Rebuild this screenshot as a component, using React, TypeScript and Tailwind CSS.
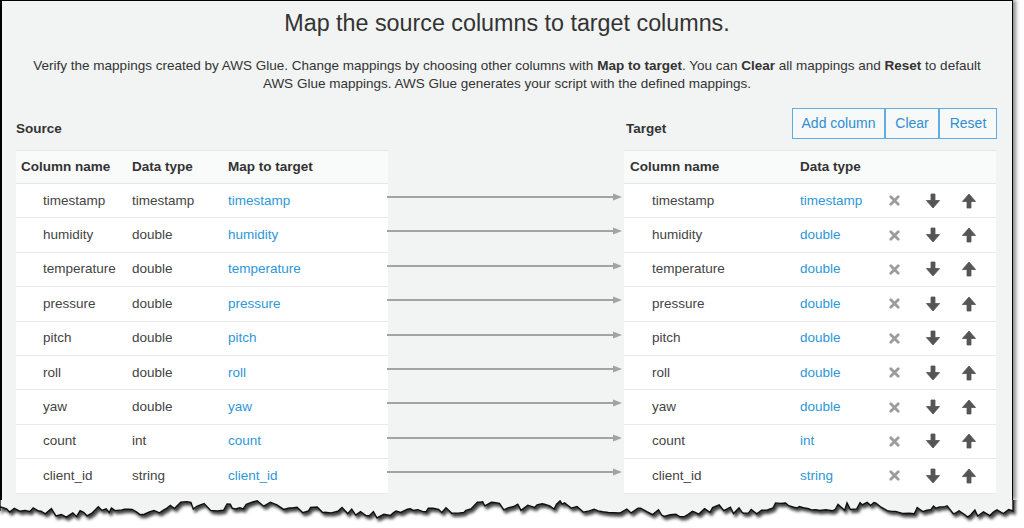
import React from 'react';

const ROWS: [string, string][] = [
  ['timestamp', 'timestamp'],
  ['humidity', 'double'],
  ['temperature', 'double'],
  ['pressure', 'double'],
  ['pitch', 'double'],
  ['roll', 'double'],
  ['yaw', 'double'],
  ['count', 'int'],
  ['client_id', 'string'],
];

// jagged "torn paper" bottom edge of the screenshot frame
const tornPath = () => {
  let seed = 7;
  const rnd = () => {
    seed = (seed * 16807) % 2147483647;
    return seed / 2147483647;
  };
  const pts: string[] = [];
  let x = 0;
  while (x < 1013) {
    const base = 9 + 3 * Math.sin(x * 0.021) + 2 * Math.sin(x * 0.083 + 2);
    const y = base + (rnd() - 0.5) * 8;
    pts.push(`${x.toFixed(1)},${y.toFixed(1)}`);
    x += 2 + rnd() * 5;
  }
  pts.push('1013,11');
  return `M0,-4 L0,11 L${pts.join(' L')} L1013,-4 Z`;
};

const Arrow: React.FC = () => (
  <svg width="236" height="10" viewBox="0 0 236 10" className="block">
    <line x1="0" y1="5" x2="226" y2="5" stroke="#a3a3a3" strokeWidth="2" />
    <polygon points="226,1.5 235,5 226,8.5" fill="#a3a3a3" />
  </svg>
);

const XIcon: React.FC = () => (
  <svg width="11" height="11" viewBox="0 0 11 11">
    <path d="M1.8 1.8 L9.2 9.2 M9.2 1.8 L1.8 9.2" stroke="#9c9c9c" strokeWidth="2.8" strokeLinecap="round" />
  </svg>
);

const DownIcon: React.FC = () => (
  <svg width="16" height="16" viewBox="0 0 16 16">
    <path d="M6 1 H10 V7.5 H14.6 L8 15 L1.4 7.5 H6 Z" fill="#555" stroke="#555" strokeWidth="0.8" strokeLinejoin="round" />
  </svg>
);

const UpIcon: React.FC = () => (
  <svg width="16" height="16" viewBox="0 0 16 16">
    <path d="M6 15 H10 V8.5 H14.6 L8 1 L1.4 8.5 H6 Z" fill="#555" stroke="#555" strokeWidth="0.8" strokeLinejoin="round" />
  </svg>
);

const SourceTable: React.FC = () => (
  <div className="w-[372px]">
    <div className="grid grid-cols-[111px_96px_1fr] h-[34px] items-center bg-[#f9fafa] border-t border-b border-[#e6e8e8] font-bold text-[#333] text-[13.5px]">
      <div className="pl-[5px]">Column name</div>
      <div className="pl-[5px]">Data type</div>
      <div className="pl-[5px]">Map to target</div>
    </div>
    {ROWS.map(([name, type]) => (
      <div key={name} className="grid grid-cols-[111px_96px_1fr] h-[34.4px] items-center bg-white border-b border-[#e9ebeb] text-[#444] text-[13.5px]">
        <div className="pl-[27px]">{name}</div>
        <div className="pl-[5px]">{type}</div>
        <div className="pl-[5px] text-[#2e97d8]">{name}</div>
      </div>
    ))}
  </div>
);

const TargetTable: React.FC = () => (
  <div className="w-[372px]">
    <div className="grid grid-cols-[171px_1fr] h-[34px] items-center bg-[#f9fafa] border-t border-b border-[#e6e8e8] font-bold text-[#333] text-[13.5px]">
      <div className="pl-[6px]">Column name</div>
      <div className="pl-[5px]">Data type</div>
    </div>
    {ROWS.map(([name, type]) => (
      <div key={name} className="grid grid-cols-[171px_84px_1fr] h-[34.4px] items-center bg-white border-b border-[#e9ebeb] text-[#444] text-[13.5px]">
        <div className="pl-[28px]">{name}</div>
        <div className="pl-[5px] text-[#2e97d8]">{type}</div>
        <div className="flex items-center">
          <span className="w-[30px] flex justify-center"><XIcon /></span>
          <span className="w-[48px] flex justify-center"><DownIcon /></span>
          <span className="w-[24px] flex justify-center"><UpIcon /></span>
        </div>
      </div>
    ))}
  </div>
);

export default function App() {
  return (
    <div className="w-[1024px] h-[528px] bg-white overflow-hidden" style={{ fontFamily: '"Liberation Sans", Arial, sans-serif' }}>
      <div className="w-[1013px] h-[500px] bg-[#f2f3f3] border-l-2 border-t border-r border-black shadow-[3px_0_4px_rgba(0,0,0,0.45)] flex flex-col">
        <h1 className="mt-[8px] text-center text-[23.3px] leading-[28px] text-[#333] font-normal">
          Map the source columns to target columns.
        </h1>
        <p className="mt-[20px] text-center text-[13.5px] leading-[18px] text-[#333]">
          <span className="whitespace-nowrap">
            Verify the mappings created by AWS Glue. Change mappings by choosing other columns with <b>Map to target</b>. You can <b>Clear</b> all mappings and <b>Reset</b> to default
          </span>
          <br />
          <span className="whitespace-nowrap">AWS Glue mappings. AWS Glue generates your script with the defined mappings.</span>
        </p>

        <div className="mt-[15px] pl-[14px] flex items-end h-[31px]">
          <div className="w-[372px] text-[13.5px] font-bold text-[#333]">Source</div>
          <div className="w-[237px]" />
          <div className="w-[372px] flex items-end justify-between">
            <div className="pl-[1px] text-[13.5px] font-bold text-[#333]">Target</div>
            <div className="flex h-[31px] text-[14px] text-[#2e8fd2]">
              <button className="w-[93px] border border-[#63ace2] bg-[#f7f8f8]">Add column</button>
              <button className="w-[54px] border border-[#63ace2] bg-[#f7f8f8]">Clear</button>
              <button className="w-[58px] border border-[#63ace2] bg-[#f7f8f8]">Reset</button>
            </div>
          </div>
        </div>

        <div className="mt-[11px] pl-[14px] flex">
          <SourceTable />
          <div className="w-[237px] pt-[34px] -ml-px">
            {ROWS.map(([name]) => (
              <div key={name} className="h-[34.4px] pt-[8px]">
                <Arrow />
              </div>
            ))}
          </div>
          <TargetTable />
        </div>
      </div>
      <svg width="1024" height="28" viewBox="0 0 1024 28" className="block">
        <defs>
          <filter id="torn" x="-2%" y="-50%" width="104%" height="200%">
            <feDropShadow dx="2" dy="3" stdDeviation="1.8" floodColor="#000" floodOpacity="0.75" />
          </filter>
        </defs>
        <path d={tornPath()} fill="#f2f3f3" stroke="#111" strokeWidth="1.4" filter="url(#torn)" />
      </svg>
    </div>
  );
}
